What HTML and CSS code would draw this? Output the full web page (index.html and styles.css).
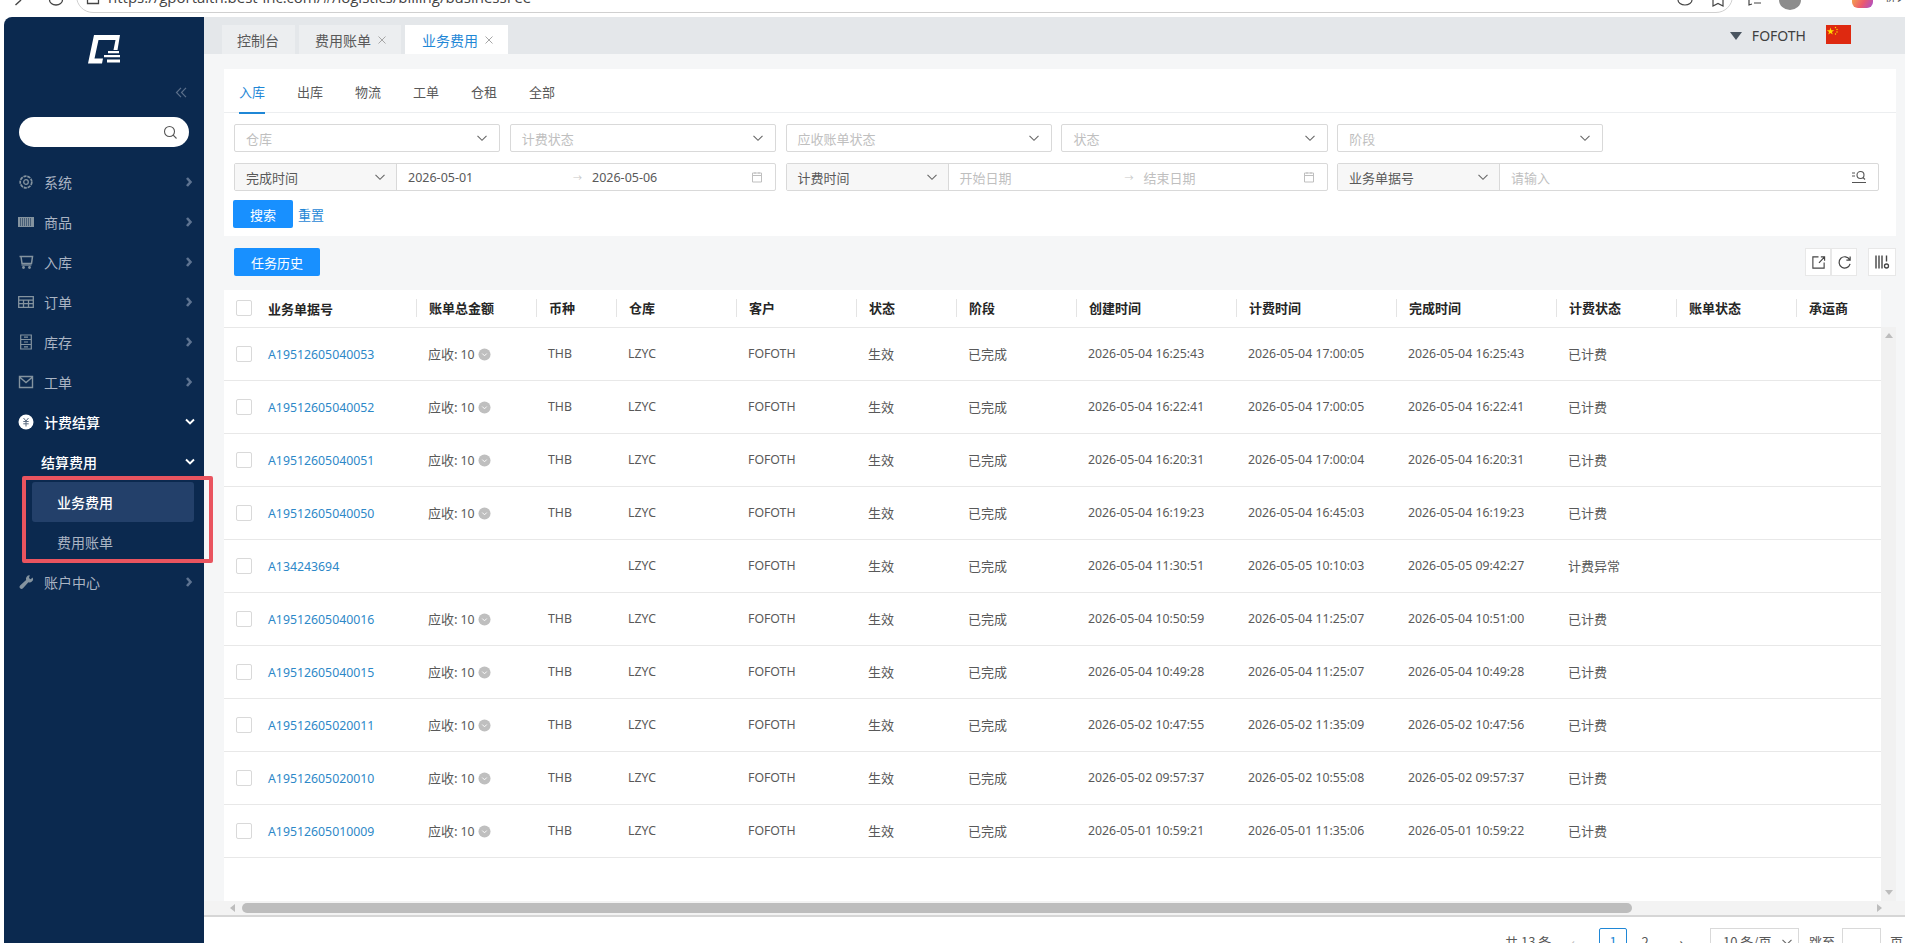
FILE: index.html
```html
<!DOCTYPE html>
<html lang="zh-CN">
<head>
    <meta charset="UTF-8">
    <meta name="viewport" content="width=device-width, initial-scale=1.0">
    <title>业务费用</title>
    <link rel="stylesheet" href="styles.css">
</head>
<body>
    <svg class="sprite" xmlns="http://www.w3.org/2000/svg">
        <symbol id="i-down" viewBox="0 0 12 12"><path d="M1.5 3.8 6 8.3l4.5-4.5" fill="none" stroke="currentColor" stroke-width="1.1"/></symbol>
        <symbol id="i-right" viewBox="0 0 8 10"><path d="M2 1l3.5 4L2 9" fill="none" stroke="currentColor" stroke-width="2.6"/></symbol>
        <symbol id="i-open" viewBox="0 0 10 8"><path d="M1 1.5l4 4 4-4" fill="none" stroke="currentColor" stroke-width="1.9"/></symbol>
        <symbol id="i-cal" viewBox="0 0 12 12"><path d="M1.5 2h9v9h-9zM1.5 4.5h9M4 1v2M8 1v2" fill="none" stroke="currentColor"/></symbol>
        <symbol id="i-badge" viewBox="0 0 14 14"><circle cx="7" cy="7" r="6.5" fill="#bfbfbf"/><path d="M4.6 6l2.4 2.4L9.4 6" fill="none" stroke="#fff" stroke-width="1"/></symbol>
        <symbol id="i-close" viewBox="0 0 8 8"><path d="M.5.5l7 7M7.500.5l-7 7" fill="none" stroke="currentColor" stroke-width="1"/></symbol>
    </svg>

    <div class="browser-bar">
        <svg class="chrome-icon" width="14" height="14" viewBox="0 0 14 14"><path d="M9 0 3.500 5" fill="none" stroke="#444" stroke-width="1.4"/></svg>
        <svg class="chrome-icon reload" width="16" height="14" viewBox="0 0 16 14"><path d="M1.500 0a6.500 5 0 0 0 13 0" fill="none" stroke="#444" stroke-width="1.3"/></svg>
        <div class="address">
            <svg class="chrome-icon" width="14" height="14" viewBox="0 0 14 14"><path d="M1.500 0v3.500h11V0" fill="none" stroke="#444" stroke-width="1.3"/></svg>
            <span class="url">https://gportalth.best-inc.com/#/logistics/billing/businessFee</span>
            <svg class="chrome-icon addr-end" width="16" height="14" viewBox="0 0 16 14"><path d="M1 0a7 5 0 0 0 14 0" fill="none" stroke="#444" stroke-width="1.2"/></svg>
            <svg class="chrome-icon" width="14" height="14" viewBox="0 0 14 14"><path d="M2 0v6l5-2.500L12 6V0" fill="none" stroke="#444" stroke-width="1.2"/></svg>
        </div>
        <svg class="chrome-icon bar-list" width="16" height="14" viewBox="0 0 16 14"><path d="M2 0v5l3-1M7 3h7" fill="none" stroke="#444" stroke-width="1.2"/></svg>
        <div class="avatar"></div>
        <div class="ext"></div>
        <span class="ext-label">聊天</span>
    </div>

    <div class="app">
        <aside class="sidebar">
            <div class="logo">
                <svg width="33" height="29" viewBox="0 0 33 29">
                    <path d="M6 0H32L29.500 15H25.500L27.500 5H10.500L6.500 23.500H15L14 28.500H0Z" fill="#fff"/>
                    <path d="M20 16h11v2.200H20zM16 20h16v2.200H16zM19 24.500h13v3H19z" fill="#fff"/>
                </svg>
            </div>
            <div class="collapse">
                <svg width="12" height="11" viewBox="0 0 12 11"><path d="M6 .8 1.500 5.500 6 10.200M11 .8 6.500 5.500 11 10.200" fill="none" stroke="currentColor" stroke-width="1.200"/></svg>
            </div>
            <div class="side-search">
                <svg width="15" height="15" viewBox="0 0 15 15"><circle cx="6.500" cy="6.500" r="5" fill="none" stroke="#555" stroke-width="1.1"/><path d="M10.200 10.200l3.300 3.300" stroke="#555" stroke-width="1.1"/></svg>
            </div>
            <nav class="menu">
                <a class="menu-item">
                    <svg class="menu-icon" viewBox="0 0 16 16"><circle cx="8" cy="8" r="5.800" fill="none" stroke="currentColor" stroke-width="1.700" stroke-dasharray="3.200 .8"/><circle cx="8" cy="8" r="2.300" fill="none" stroke="currentColor" stroke-width="1.300"/></svg>
                    <span>系统</span>
                    <svg class="menu-arrow"><use href="#i-right"/></svg>
                </a>
                <a class="menu-item">
                    <svg class="menu-icon" viewBox="0 0 16 16"><path d="M0 3h16v10H0z" fill="currentColor"/><path d="M2.500 4v8M4.500 4v8M6.500 4v8M8.500 4v8M10.500 4v8M12.500 4v8" stroke="#0b294f" stroke-width=".5"/></svg>
                    <span>商品</span>
                    <svg class="menu-arrow"><use href="#i-right"/></svg>
                </a>
                <a class="menu-item">
                    <svg class="menu-icon" viewBox="0 0 16 16"><path d="M1.500 2.500h13l-1 7H4L3 2.500" fill="none" stroke="currentColor" stroke-width="1.500"/><path d="M3.500 11h10" stroke="currentColor" stroke-width="1.300"/><circle cx="5.500" cy="13.500" r="1.400" fill="currentColor"/><circle cx="11.500" cy="13.500" r="1.400" fill="currentColor"/></svg>
                    <span>入库</span>
                    <svg class="menu-arrow"><use href="#i-right"/></svg>
                </a>
                <a class="menu-item">
                    <svg class="menu-icon" viewBox="0 0 16 16"><path d="M.7 2.700h14.600v10.600H.7zM.7 6.200h14.600M.7 9.700h14.600M5.500 6.200v7.100M10.500 6.200v7.100" fill="none" stroke="currentColor" stroke-width="1.300"/></svg>
                    <span>订单</span>
                    <svg class="menu-arrow"><use href="#i-right"/></svg>
                </a>
                <a class="menu-item">
                    <svg class="menu-icon" viewBox="0 0 16 16"><path d="M2.700 1h10.600v14H2.700zM2.700 5.500h10.600M2.700 10.500h10.600M6 3.200h4M6 8h4M6 12.800h4" fill="none" stroke="currentColor" stroke-width="1.200"/></svg>
                    <span>库存</span>
                    <svg class="menu-arrow"><use href="#i-right"/></svg>
                </a>
                <a class="menu-item">
                    <svg class="menu-icon" viewBox="0 0 16 16"><path d="M1.500 2.500h13v11h-13zM1.500 3l6.500 5.500L14.500 3" fill="none" stroke="currentColor" stroke-width="1.400"/></svg>
                    <span>工单</span>
                    <svg class="menu-arrow"><use href="#i-right"/></svg>
                </a>
                <a class="menu-item is-open">
                    <svg class="menu-icon" viewBox="0 0 16 16"><circle cx="8" cy="8" r="7.500" fill="#fff"/><path d="M5.500 4 8 7l2.500-3M5.300 7.500h5.400M5.300 9.800h5.400M8 7v5.500" fill="none" stroke="#5b6b80" stroke-width="1"/></svg>
                    <span>计费结算</span>
                    <svg class="menu-arrow-open"><use href="#i-open"/></svg>
                </a>
                <a class="menu-item is-open sub-title">
                    <span>结算费用</span>
                    <svg class="menu-arrow-open"><use href="#i-open"/></svg>
                </a>
                <a class="sub-item is-active">业务费用</a>
                <a class="sub-item">费用账单</a>
                <a class="menu-item">
                    <svg class="menu-icon" viewBox="0 0 16 16"><path d="M14.800 3.500l-2.300 1.700-1.500-1.200.8-2.700a3.600 3.600 0 0 0-3.700 4.700l-6 5.400a2 2 0 0 0 2.900 2.900l5.400-6a3.600 3.600 0 0 0 4.400-4.800z" fill="currentColor"/></svg>
                    <span>账户中心</span>
                    <svg class="menu-arrow"><use href="#i-right"/></svg>
                </a>
            </nav>
            <div class="annotation"></div>
        </aside>

        <main class="main">
            <header class="topbar">
                <div class="page-tabs">
                    <div class="page-tab tab-first">控制台</div>
                    <div class="page-tab">费用账单<svg class="tab-close"><use href="#i-close"/></svg></div>
                    <div class="page-tab is-current">业务费用<svg class="tab-close"><use href="#i-close"/></svg></div>
                </div>
                <div class="user-box">
                    <span class="user-caret"></span>
                    <span class="user-name">FOFOTH</span>
                    <svg class="flag" viewBox="0 0 25 19">
                        <rect width="25" height="19" fill="#de2910"/>
                        <path d="M4.500 2.500l.9 2.700h2.800L5.900 6.900l.9 2.700-2.300-1.700-2.300 1.700.9-2.700L.8 5.200h2.800z" fill="#ffde00"/>
                        <circle cx="9.500" cy="2.500" r=".7" fill="#ffde00"/><circle cx="11" cy="4.500" r=".7" fill="#ffde00"/><circle cx="11" cy="7" r=".7" fill="#ffde00"/><circle cx="9.500" cy="9" r=".7" fill="#ffde00"/>
                    </svg>
                </div>
            </header>

            <div class="content">
                <section class="filter-panel">
                    <div class="type-tabs">
                        <span class="type-tab is-current">入库</span>
                        <span class="type-tab">出库</span>
                        <span class="type-tab">物流</span>
                        <span class="type-tab">工单</span>
                        <span class="type-tab">仓租</span>
                        <span class="type-tab">全部</span>
                    </div>
                    <div class="filter-body">
                        <div class="filter-row-five">
                            <div class="field"><span class="ph">仓库</span><svg class="caret"><use href="#i-down"/></svg></div>
                            <div class="field"><span class="ph">计费状态</span><svg class="caret"><use href="#i-down"/></svg></div>
                            <div class="field"><span class="ph">应收账单状态</span><svg class="caret"><use href="#i-down"/></svg></div>
                            <div class="field"><span class="ph">状态</span><svg class="caret"><use href="#i-down"/></svg></div>
                            <div class="field"><span class="ph">阶段</span><svg class="caret"><use href="#i-down"/></svg></div>
                        </div>
                        <div class="filter-row-three">
                            <div class="group">
                                <div class="group-select">完成时间<svg class="caret"><use href="#i-down"/></svg></div>
                                <div class="date-range">
                                    <span class="date-val">2026-05-01</span><span class="date-sep">→</span><span class="date-val">2026-05-06</span>
                                    <svg class="cal"><use href="#i-cal"/></svg>
                                </div>
                            </div>
                            <div class="group">
                                <div class="group-select">计费时间<svg class="caret"><use href="#i-down"/></svg></div>
                                <div class="date-range">
                                    <span class="date-val ph">开始日期</span><span class="date-sep">→</span><span class="date-val ph">结束日期</span>
                                    <svg class="cal"><use href="#i-cal"/></svg>
                                </div>
                            </div>
                            <div class="group">
                                <div class="group-select">业务单据号<svg class="caret"><use href="#i-down"/></svg></div>
                                <div class="date-range">
                                    <span class="ph">请输入</span>
                                    <svg class="list-search" viewBox="0 0 14 14"><path d="M0 3h3M0 6h3M0 12.500h14" fill="none" stroke="#555" stroke-width="1"/><circle cx="8.500" cy="5" r="3.500" fill="none" stroke="#555" stroke-width="1.100"/><path d="M11 7.500l2 2" stroke="#555" stroke-width="1.100"/></svg>
                                </div>
                            </div>
                        </div>
                        <div class="filter-actions">
                            <button class="btn-primary btn-search">搜索</button>
                            <a class="link-reset">重置</a>
                        </div>
                    </div>
                </section>

                <div class="toolbar">
                    <button class="btn-primary btn-history">任务历史</button>
                    <div class="tool-group">
                        <div class="tool-joined">
                            <button class="tool-btn">
                                <svg viewBox="0 0 16 16" width="15" height="15"><path d="M8 2H2v12h12V8M8.500 8.500 14 2.500M10.500 2H14.500V6" fill="none" stroke="#444" stroke-width="1.200"/></svg>
                            </button>
                            <button class="tool-btn">
                                <svg viewBox="0 0 16 16" width="15" height="15"><path d="M13.500 5A6 6 0 1 0 14 9.500M14 1.500V5.500H10" fill="none" stroke="#444" stroke-width="1.300"/></svg>
                            </button>
                        </div>
                        <button class="tool-btn tool-alone">
                            <svg viewBox="0 0 16 16" width="16" height="16"><path d="M2 1.500v13M5 1.500v13M8 1.500v13M12.500 1.500v6" fill="none" stroke="#444" stroke-width="1.400"/><circle cx="12.500" cy="12" r="2" fill="none" stroke="#444" stroke-width="1.300"/></svg>
                        </button>
                    </div>
                </div>

                <section class="table-panel">
                    <div class="table-area">
                        <div class="table-clip">
                            <table class="bill-table">
                                <colgroup>
                                    <col class="w32"><col class="w160"><col class="w120"><col class="w80"><col class="w120"><col class="w120"><col class="w100"><col class="w120"><col class="w160"><col class="w160"><col class="w160"><col class="w120"><col class="w120"><col class="w120">
                                </colgroup>
                                <thead>
                                    <tr>
                                        <th class="check-cell"><span class="checkbox"></span></th>
                                        <th><span class="th-first">业务单据号</span></th>
                                        <th><span class="th-in">账单总金额</span></th>
                                        <th><span class="th-in">币种</span></th>
                                        <th><span class="th-in">仓库</span></th>
                                        <th><span class="th-in">客户</span></th>
                                        <th><span class="th-in">状态</span></th>
                                        <th><span class="th-in">阶段</span></th>
                                        <th><span class="th-in">创建时间</span></th>
                                        <th><span class="th-in">计费时间</span></th>
                                        <th><span class="th-in">完成时间</span></th>
                                        <th><span class="th-in">计费状态</span></th>
                                        <th><span class="th-in">账单状态</span></th>
                                        <th><span class="th-in">承运商</span></th>
                                    </tr>
                                </thead>
                                <tbody>
                                    <tr>
                                        <td class="check-cell"><span class="checkbox"></span></td>
                                        <td><a class="doc-link">A19512605040053</a></td>
                                        <td>应收: <span class="lat">10</span> <svg class="badge"><use href="#i-badge"/></svg></td>
                                        <td class="lat">THB</td><td class="lat">LZYC</td><td class="lat">FOFOTH</td>
                                        <td>生效</td><td>已完成</td>
                                        <td class="lat">2026-05-04 16:25:43</td><td class="lat">2026-05-04 17:00:05</td><td class="lat">2026-05-04 16:25:43</td>
                                        <td>已计费</td><td></td><td></td>
                                    </tr>
                                    <tr>
                                        <td class="check-cell"><span class="checkbox"></span></td>
                                        <td><a class="doc-link">A19512605040052</a></td>
                                        <td>应收: <span class="lat">10</span> <svg class="badge"><use href="#i-badge"/></svg></td>
                                        <td class="lat">THB</td><td class="lat">LZYC</td><td class="lat">FOFOTH</td>
                                        <td>生效</td><td>已完成</td>
                                        <td class="lat">2026-05-04 16:22:41</td><td class="lat">2026-05-04 17:00:05</td><td class="lat">2026-05-04 16:22:41</td>
                                        <td>已计费</td><td></td><td></td>
                                    </tr>
                                    <tr>
                                        <td class="check-cell"><span class="checkbox"></span></td>
                                        <td><a class="doc-link">A19512605040051</a></td>
                                        <td>应收: <span class="lat">10</span> <svg class="badge"><use href="#i-badge"/></svg></td>
                                        <td class="lat">THB</td><td class="lat">LZYC</td><td class="lat">FOFOTH</td>
                                        <td>生效</td><td>已完成</td>
                                        <td class="lat">2026-05-04 16:20:31</td><td class="lat">2026-05-04 17:00:04</td><td class="lat">2026-05-04 16:20:31</td>
                                        <td>已计费</td><td></td><td></td>
                                    </tr>
                                    <tr>
                                        <td class="check-cell"><span class="checkbox"></span></td>
                                        <td><a class="doc-link">A19512605040050</a></td>
                                        <td>应收: <span class="lat">10</span> <svg class="badge"><use href="#i-badge"/></svg></td>
                                        <td class="lat">THB</td><td class="lat">LZYC</td><td class="lat">FOFOTH</td>
                                        <td>生效</td><td>已完成</td>
                                        <td class="lat">2026-05-04 16:19:23</td><td class="lat">2026-05-04 16:45:03</td><td class="lat">2026-05-04 16:19:23</td>
                                        <td>已计费</td><td></td><td></td>
                                    </tr>
                                    <tr>
                                        <td class="check-cell"><span class="checkbox"></span></td>
                                        <td><a class="doc-link">A134243694</a></td>
                                        <td></td>
                                        <td></td><td class="lat">LZYC</td><td class="lat">FOFOTH</td>
                                        <td>生效</td><td>已完成</td>
                                        <td class="lat">2026-05-04 11:30:51</td><td class="lat">2026-05-05 10:10:03</td><td class="lat">2026-05-05 09:42:27</td>
                                        <td>计费异常</td><td></td><td></td>
                                    </tr>
                                    <tr>
                                        <td class="check-cell"><span class="checkbox"></span></td>
                                        <td><a class="doc-link">A19512605040016</a></td>
                                        <td>应收: <span class="lat">10</span> <svg class="badge"><use href="#i-badge"/></svg></td>
                                        <td class="lat">THB</td><td class="lat">LZYC</td><td class="lat">FOFOTH</td>
                                        <td>生效</td><td>已完成</td>
                                        <td class="lat">2026-05-04 10:50:59</td><td class="lat">2026-05-04 11:25:07</td><td class="lat">2026-05-04 10:51:00</td>
                                        <td>已计费</td><td></td><td></td>
                                    </tr>
                                    <tr>
                                        <td class="check-cell"><span class="checkbox"></span></td>
                                        <td><a class="doc-link">A19512605040015</a></td>
                                        <td>应收: <span class="lat">10</span> <svg class="badge"><use href="#i-badge"/></svg></td>
                                        <td class="lat">THB</td><td class="lat">LZYC</td><td class="lat">FOFOTH</td>
                                        <td>生效</td><td>已完成</td>
                                        <td class="lat">2026-05-04 10:49:28</td><td class="lat">2026-05-04 11:25:07</td><td class="lat">2026-05-04 10:49:28</td>
                                        <td>已计费</td><td></td><td></td>
                                    </tr>
                                    <tr>
                                        <td class="check-cell"><span class="checkbox"></span></td>
                                        <td><a class="doc-link">A19512605020011</a></td>
                                        <td>应收: <span class="lat">10</span> <svg class="badge"><use href="#i-badge"/></svg></td>
                                        <td class="lat">THB</td><td class="lat">LZYC</td><td class="lat">FOFOTH</td>
                                        <td>生效</td><td>已完成</td>
                                        <td class="lat">2026-05-02 10:47:55</td><td class="lat">2026-05-02 11:35:09</td><td class="lat">2026-05-02 10:47:56</td>
                                        <td>已计费</td><td></td><td></td>
                                    </tr>
                                    <tr>
                                        <td class="check-cell"><span class="checkbox"></span></td>
                                        <td><a class="doc-link">A19512605020010</a></td>
                                        <td>应收: <span class="lat">10</span> <svg class="badge"><use href="#i-badge"/></svg></td>
                                        <td class="lat">THB</td><td class="lat">LZYC</td><td class="lat">FOFOTH</td>
                                        <td>生效</td><td>已完成</td>
                                        <td class="lat">2026-05-02 09:57:37</td><td class="lat">2026-05-02 10:55:08</td><td class="lat">2026-05-02 09:57:37</td>
                                        <td>已计费</td><td></td><td></td>
                                    </tr>
                                    <tr>
                                        <td class="check-cell"><span class="checkbox"></span></td>
                                        <td><a class="doc-link">A19512605010009</a></td>
                                        <td>应收: <span class="lat">10</span> <svg class="badge"><use href="#i-badge"/></svg></td>
                                        <td class="lat">THB</td><td class="lat">LZYC</td><td class="lat">FOFOTH</td>
                                        <td>生效</td><td>已完成</td>
                                        <td class="lat">2026-05-01 10:59:21</td><td class="lat">2026-05-01 11:35:06</td><td class="lat">2026-05-01 10:59:22</td>
                                        <td>已计费</td><td></td><td></td>
                                    </tr>
                                </tbody>
                            </table>
                        </div>
                        <div class="v-scroll">
                            <span class="arrow-up"></span>
                            <span class="arrow-down"></span>
                        </div>
                    </div>
                    <div class="h-scroll">
                        <span class="arrow-left"></span>
                        <span class="h-thumb"></span>
                        <span class="arrow-right"></span>
                    </div>
                </section>
            </div>

            <footer class="pager">
                <span class="pager-total">共 13 条</span>
                <span class="pager-arrow pager-prev">‹</span>
                <span class="pager-num is-current">1</span>
                <span class="pager-num">2</span>
                <span class="pager-arrow pager-next">›</span>
                <span class="pager-size">10 条/页<svg class="caret"><use href="#i-down"/></svg></span>
                <span class="pager-jump">跳至</span>
                <span class="pager-input"></span>
                <span class="pager-unit">页</span>
            </footer>
        </main>
    </div>
</body>
</html>
```

FILE: styles.css
```css
* {
  box-sizing: border-box;
}

html, body {
  height: 100%;
  margin: 0;
}

body {
  display: flex;
  flex-direction: column;
  overflow: hidden;
  background-color: #fff;
  color: #595959;
  font-family: "Noto Sans CJK SC", "Noto Sans", sans-serif;
  font-size: 13px;
}

.sprite {
  display: none;
}

/* browser strip, cut off at the top of the shot */
.browser-bar {
  height: 17px;
  flex-shrink: 0;
  display: flex;
  align-items: flex-start;
  padding-left: 12px;
  overflow: hidden;
  background-color: #fff;
}

.chrome-icon {
  flex-shrink: 0;
}

.reload {
  margin-left: 22px;
}

.address {
  width: 1657px;
  height: 34px;
  flex-shrink: 0;
  margin: -21px 0 0 12px;
  padding: 0 7px 5px 9px;
  display: flex;
  align-items: flex-end;
  gap: 8px;
  border: 1px solid #d0d0d0;
  border-radius: 17px;
}

.address .chrome-icon {
  transform: translateY(7px);
}

.url {
  font-family: "Open Sans", sans-serif;
  font-size: 15px;
  line-height: 20px;
  color: #444;
}

.addr-end {
  margin-left: auto;
  margin-right: 10px;
}

.bar-list {
  margin-left: 14px;
}

.avatar {
  width: 22px;
  height: 20px;
  flex-shrink: 0;
  margin: -10px 0 0 16px;
  border-radius: 50%;
  background-color: #8c8c8c;
}

.ext {
  width: 21px;
  height: 20px;
  flex-shrink: 0;
  margin: -12px 0 0 51px;
  border-radius: 6px;
  background: linear-gradient(120deg, #f7c23c, #ec5a6d 60%, #a64fd0);
}

.ext-label {
  flex-shrink: 0;
  margin: -16px 0 0 10px;
  color: #555;
  font-size: 14px;
  white-space: nowrap;
}

.app {
  flex: 1;
  min-height: 0;
  display: flex;
  padding-left: 4px;
}

/* sidebar */
.sidebar {
  position: relative;
  width: 200px;
  flex-shrink: 0;
  padding-top: 18px;
  background-color: #0b294f;
  border-top-left-radius: 8px;
  color: #aab4c3;
  z-index: 2;
}

.logo {
  height: 29px;
  display: flex;
  justify-content: center;
}

.collapse {
  height: 18px;
  margin-top: 19px;
  padding-right: 17px;
  display: flex;
  align-items: center;
  justify-content: flex-end;
  color: #5b6f8a;
}

.side-search {
  height: 30px;
  margin: 16px 15px 15px 15px;
  padding-right: 11px;
  display: flex;
  align-items: center;
  justify-content: flex-end;
  background-color: #fff;
  border-radius: 15px;
}

.menu-item {
  height: 40px;
  display: flex;
  align-items: center;
  padding-left: 14px;
  font-size: 14px;
}

.menu-item.is-open {
  color: #fff;
  font-weight: 500;
}

.menu-icon {
  width: 16px;
  height: 16px;
  margin-right: 10px;
  flex-shrink: 0;
  color: #84939f;
}

.menu-arrow {
  width: 8px;
  height: 10px;
  margin-left: auto;
  margin-right: 11px;
  color: #5e7391;
}

.menu-arrow-open {
  width: 10px;
  height: 8px;
  margin-left: auto;
  margin-right: 9px;
  color: #fff;
}

.sub-title {
  padding-left: 37px;
}

.sub-item {
  height: 40px;
  margin: 0 10px 0 28px;
  padding-left: 25px;
  display: flex;
  align-items: center;
  font-size: 14px;
  border-radius: 3px;
}

.sub-item.is-active {
  background-color: #23406a;
  color: #fff;
  font-weight: 500;
}

.annotation {
  position: absolute;
  left: 18px;
  top: 459px;
  width: 191px;
  height: 87px;
  border: 4px solid #e9545f;
  border-radius: 2px;
  pointer-events: none;
}

/* main */
.main {
  flex: 1;
  min-width: 0;
  display: flex;
  flex-direction: column;
}

.topbar {
  height: 37px;
  flex-shrink: 0;
  display: flex;
  justify-content: space-between;
  padding-left: 18px;
  background-color: #e4e7ea;
}

.page-tabs {
  display: flex;
  align-items: flex-end;
  gap: 4px;
}

.page-tab {
  height: 29px;
  padding: 0 15px 0 16px;
  display: flex;
  align-items: center;
  gap: 7px;
  background-color: #eceef0;
  font-size: 14px;
}

.tab-first {
  padding: 0 16px 0 15px;
}

.page-tab.is-current {
  padding-left: 17px;
  background-color: #fff;
  color: #1f87d6;
}

.tab-close {
  width: 8px;
  height: 8px;
  color: #a6a6a6;
}

.user-box {
  display: flex;
  align-items: center;
  padding-right: 54px;
}

.user-caret {
  width: 0;
  height: 0;
  border-left: 6.500px solid transparent;
  border-right: 6.500px solid transparent;
  border-top: 8px solid #4a5560;
  margin-right: 10px;
}

.user-name {
  color: #404040;
  font-family: "Noto Sans", sans-serif;
  font-size: 14px;
  margin-right: 20px;
}

.flag {
  width: 25px;
  height: 19px;
  margin-top: -3px;
}

.content {
  flex: 1;
  min-height: 0;
  display: flex;
  flex-direction: column;
  padding: 15px 9px 0 20px;
  background-color: #f5f6f7;
}

.filter-panel {
  height: 167px;
  flex-shrink: 0;
  background-color: #fff;
}

.type-tabs {
  height: 44px;
  padding-left: 15px;
  display: flex;
  gap: 32px;
  border-bottom: 1px solid #eceef0;
}

.type-tab {
  height: 45px;
  width: 26px;
  line-height: 46px;
  white-space: nowrap;
  font-size: 13px;
}

.type-tab.is-current {
  color: #1f87d6;
  border-bottom: 2px solid #1f87d6;
}

.filter-body {
  padding: 11px 17px 0 10px;
}

.filter-row-five {
  display: grid;
  grid-template-columns: repeat(5, 266.300px);
  column-gap: 9.500px;
}

.filter-row-three {
  margin-top: 11px;
  display: grid;
  grid-template-columns: repeat(3, 1fr);
  column-gap: 9.500px;
}

.field {
  height: 28px;
  padding: 0 11px;
  display: flex;
  align-items: center;
  justify-content: space-between;
  border: 1px solid #d9d9d9;
  border-radius: 2px;
}

.ph {
  color: #bfbfbf;
}

.caret {
  width: 12px;
  height: 12px;
  flex-shrink: 0;
  color: #666;
}

.group {
  height: 28px;
  display: flex;
  border: 1px solid #d9d9d9;
  border-radius: 2px;
}

.group-select {
  width: 162px;
  flex-shrink: 0;
  padding: 0 10px 0 11px;
  display: flex;
  align-items: center;
  justify-content: space-between;
  background-color: #f7f7f7;
  border-right: 1px solid #d9d9d9;
  color: #595959;
}

.date-range {
  flex: 1;
  display: flex;
  align-items: center;
  padding: 0 12px 0 11px;
}

.date-val {
  width: 158px;
  font-family: "Noto Sans", "Noto Sans CJK SC", sans-serif;
  font-size: 12.500px;
}

.date-val.ph {
  font-family: "Noto Sans CJK SC", sans-serif;
  font-size: 13px;
}

.date-sep {
  width: 26px;
  padding-left: 7px;
  color: #c8c8c8;
  font-size: 9px;
}

.cal {
  width: 12px;
  height: 12px;
  margin-left: auto;
  color: #bfbfbf;
}

.list-search {
  width: 14px;
  height: 14px;
  margin-left: auto;
}

.filter-actions {
  margin-top: 9px;
  display: flex;
  align-items: center;
  gap: 5px;
}

.btn-primary {
  border: none;
  border-radius: 2px;
  background-color: #1890ff;
  color: #fff;
  font-family: inherit;
  font-size: 13px;
  height: 28px;
  padding: 0;
}

.btn-search {
  width: 60px;
  margin-left: -1px;
}

.link-reset {
  color: #1f87d6;
}

.toolbar {
  height: 54px;
  flex-shrink: 0;
  display: flex;
  justify-content: space-between;
  padding-top: 12px;
  padding-left: 10px;
}

.btn-history {
  width: 86px;
}

.tool-group {
  display: flex;
  gap: 11px;
  height: 28px;
}

.tool-joined {
  display: flex;
}

.tool-btn {
  width: 26px;
  height: 28px;
  padding: 0;
  display: flex;
  align-items: center;
  justify-content: center;
  background-color: #fff;
  border: 1px solid #e8e8e8;
}

.tool-alone {
  width: 28px;
}

/* table */
.table-panel {
  flex: 1;
  min-height: 0;
  display: flex;
  flex-direction: column;
}

.table-area {
  flex: 1;
  min-height: 0;
  display: flex;
}

.table-clip {
  flex: 1;
  min-width: 0;
  overflow: hidden;
  background-color: #fff;
}

.bill-table {
  width: 1692px;
  table-layout: fixed;
  border-collapse: collapse;
}

.w32 { width: 32px; }
.w80 { width: 80px; }
.w100 { width: 100px; }
.w120 { width: 120px; }
.w160 { width: 160px; }

.bill-table th {
  height: 37px;
  padding: 0;
  text-align: left;
  color: #262626;
  font-weight: 600;
  font-size: 13px;
  border-bottom: 1px solid #e8e8e8;
}

.th-first {
  padding-left: 12px;
}

.th-in {
  display: block;
  height: 18px;
  line-height: 18px;
  padding-left: 12px;
  border-left: 1px solid #e4e4e4;
}

.bill-table td {
  height: 53px;
  padding: 0 0 0 12px;
  white-space: nowrap;
  border-bottom: 1px solid #e8e8e8;
  font-size: 13px;
}

.bill-table .check-cell {
  padding-left: 12px;
}

.bill-table td.lat,
.lat {
  font-family: "Noto Sans", sans-serif;
  font-size: 12.300px;
}

.checkbox {
  display: block;
  width: 16px;
  height: 16px;
  background-color: #fff;
  border: 1px solid #d9d9d9;
  border-radius: 2px;
}

.doc-link {
  color: #2d88c8;
  font-family: "Noto Sans", sans-serif;
  font-size: 12.300px;
}

.badge {
  width: 13px;
  height: 13px;
  vertical-align: -2px;
}

.v-scroll {
  width: 15px;
  flex-shrink: 0;
  padding: 6px 3px;
  display: flex;
  flex-direction: column;
  justify-content: space-between;
  align-items: center;
  background: linear-gradient(to bottom, #f5f6f7 37px, #f1f1f1 37px);
}

.v-scroll .arrow-up {
  margin-top: 37px;
  border-left: 4px solid transparent;
  border-right: 4px solid transparent;
  border-bottom: 5px solid #bdbdbd;
}

.v-scroll .arrow-down {
  border-left: 4px solid transparent;
  border-right: 4px solid transparent;
  border-top: 5px solid #bdbdbd;
}

.h-scroll {
  height: 16px;
  flex-shrink: 0;
  margin-left: -20px;
  margin-right: -9px;
  padding: 0 18px 0 26px;
  display: flex;
  align-items: center;
  background-color: #f3f3f3;
  border-bottom: 2px solid #d6d6d6;
}

.arrow-left {
  border-top: 4px solid transparent;
  border-bottom: 4px solid transparent;
  border-right: 5px solid #bdbdbd;
}

.h-thumb {
  width: 1390px;
  height: 10px;
  margin-left: 7px;
  background-color: #bdbdbd;
  border-radius: 5px;
}

.arrow-right {
  margin-left: auto;
  margin-right: 5px;
  border-top: 4px solid transparent;
  border-bottom: 4px solid transparent;
  border-left: 5px solid #bdbdbd;
}

/* pager, runs off the bottom edge */
.pager {
  height: 26px;
  flex-shrink: 0;
  display: flex;
  align-items: flex-start;
  padding: 11px 0 0 1301px;
  overflow: hidden;
  background-color: #fff;
  line-height: 28px;
}

.pager-total {
  width: 65px;
}

.pager-arrow {
  width: 24px;
  font-size: 18px;
  color: #bfbfbf;
}

.pager-next {
  margin-left: 20px;
  width: 31px;
  color: #595959;
}

.pager-num {
  width: 28px;
  height: 28px;
  flex-shrink: 0;
  text-align: center;
}

.pager-num.is-current {
  margin-left: 5px;
  margin-right: 4px;
  color: #1f87d6;
  border: 1px solid #1f87d6;
  border-radius: 2px;
  line-height: 26px;
}

.pager-size {
  width: 89px;
  height: 28px;
  flex-shrink: 0;
  padding: 0 5px 0 12px;
  display: flex;
  justify-content: space-between;
  align-items: center;
  border: 1px solid #d9d9d9;
  line-height: 26px;
}

.pager-jump {
  margin-left: 10px;
  width: 33px;
}

.pager-input {
  width: 39px;
  height: 28px;
  flex-shrink: 0;
  border: 1px solid #d9d9d9;
}

.pager-unit {
  margin-left: 9px;
}
```
